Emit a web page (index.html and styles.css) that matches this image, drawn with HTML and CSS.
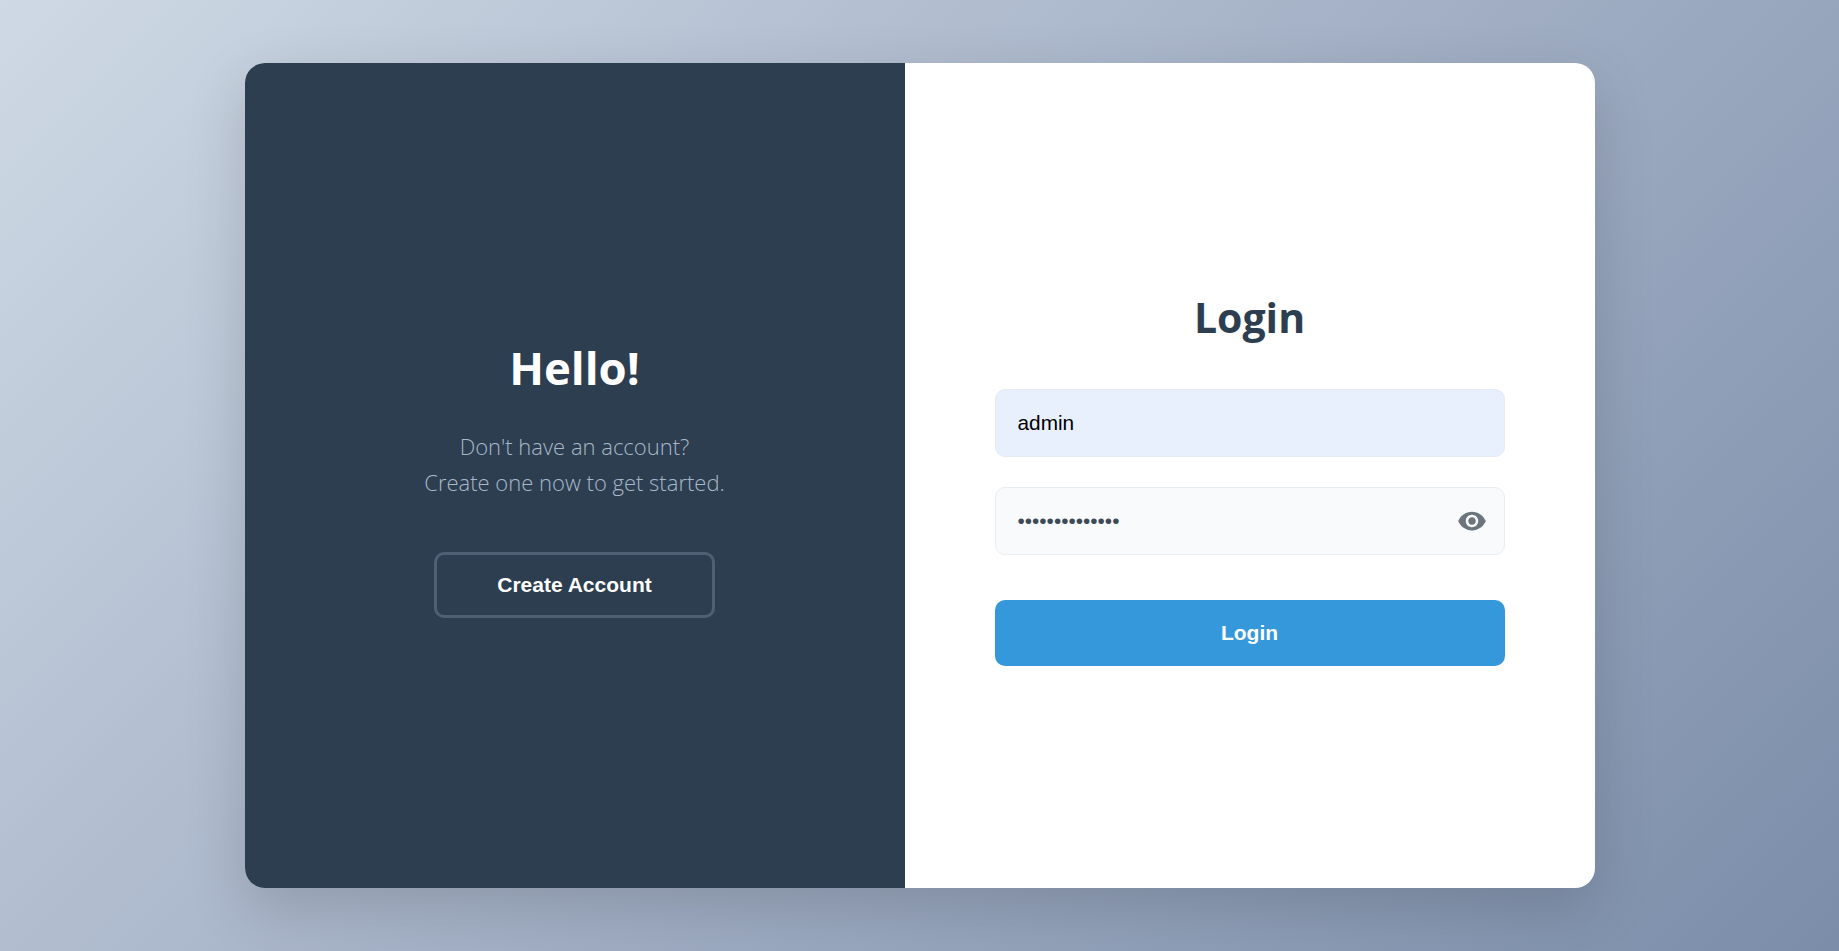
FILE: index.html
```html
<!DOCTYPE html>
<html lang="en">
<head>
    <meta charset="UTF-8">
    <meta name="viewport" content="width=device-width, initial-scale=1.0">
    <title>Login</title>
    <link rel="stylesheet" href="styles.css">
</head>
<body>
    <div class="container">
        <div class="panel-left">
            <h1>Hello!</h1>
            <p>Don't have an account?<br>Create one now to get started.</p>
            <button type="button" class="btn-outline">Create Account</button>
        </div>
        <div class="panel-right">
            <h2>Login</h2>
            <form class="login-form">
                <input type="text" class="field field-filled" name="username" value="admin">
                <div class="password-wrap">
                    <input type="password" class="field" name="password" value="adminadmin1234">
                    <button type="button" class="eye" aria-label="Show password">
                        <svg viewBox="0 0 24 24" width="30" height="30" fill="currentColor"><path d="M12 4.5C7 4.5 2.73 7.61 1 12c1.73 4.39 6 7.5 11 7.5s9.27-3.11 11-7.5c-1.73-4.39-6-7.5-11-7.5zM12 17c-2.76 0-5-2.24-5-5s2.24-5 5-5 5 2.24 5 5-2.24 5-5 5zm0-8c-1.66 0-3 1.34-3 3s1.34 3 3 3 3-1.34 3-3-1.34-3-3-3z"/></svg>
                    </button>
                </div>
                <button type="button" class="btn-primary">Login</button>
            </form>
        </div>
    </div>
</body>
</html>
```

FILE: styles.css
```css
* {
    box-sizing: border-box;
}
body {
    margin: 0;
    height: 100vh;
    display: flex;
    align-items: center;
    justify-content: center;
    font-family: "Open Sans", "Noto Sans", sans-serif;
    background: linear-gradient(135deg, #cfd9e5 0%, #a4b1c6 50%, #7b8da9 100%);
    overflow: hidden;
}
.container {
    width: 1350px;
    height: 825px;
    display: flex;
    border-radius: 20px;
    overflow: hidden;
    background-color: #fff;
    box-shadow: 0 20px 60px rgba(0, 0, 0, 0.15);
}
.panel-left {
    width: 660px;
    padding-top: 2px;
    background-color: #2c3e50;
    color: #fff;
    display: flex;
    flex-direction: column;
    align-items: center;
    justify-content: center;
    text-align: center;
}
.panel-left h1 {
    margin: 0 0 28px;
    font-size: 45.5px;
    line-height: 65px;
    font-weight: 700;
}
.panel-left p {
    margin: 0 0 52px;
    font-size: 22px;
    line-height: 36px;
    font-weight: 300;
    color: #a9b8c9;
}
.btn-outline {
    width: 281px;
    height: 66px;
    border: 3px solid #4f6074;
    border-radius: 10px;
    background: transparent;
    color: #fff;
    font-family: "Liberation Sans", Arial, sans-serif;
    font-size: 21px;
    font-weight: 700;
}
.panel-right {
    flex: 1;
    padding: 5px 90px 0;
    display: flex;
    flex-direction: column;
    justify-content: center;
}
.panel-right h2 {
    margin: 0 0 45px;
    text-align: center;
    font-size: 41px;
    line-height: 54px;
    font-weight: 700;
    color: #2c3e50;
}
.login-form {
    display: flex;
    flex-direction: column;
}
.field {
    display: block;
    width: 100%;
    height: 68px;
    padding: 0 22px;
    border: 1px solid #e9eef2;
    border-radius: 10px;
    background-color: #f8fafc;
    color: #3f4a57;
    font-family: "Liberation Sans", Arial, sans-serif;
    font-size: 20.8px;
    outline: none;
}
.field-filled {
    border-color: #e4ebf5;
    background-color: #e8f0fe;
    color: #000;
}
.password-wrap {
    position: relative;
    margin-top: 30px;
}
.eye {
    position: absolute;
    top: 19px;
    right: 18px;
    padding: 0;
    border: none;
    background: none;
    color: #6c757d;
    display: flex;
}
.btn-primary {
    height: 66px;
    margin-top: 45px;
    border: none;
    border-radius: 10px;
    background-color: #3498db;
    color: #fff;
    font-family: "Liberation Sans", Arial, sans-serif;
    font-size: 21px;
    font-weight: 700;
}
```
